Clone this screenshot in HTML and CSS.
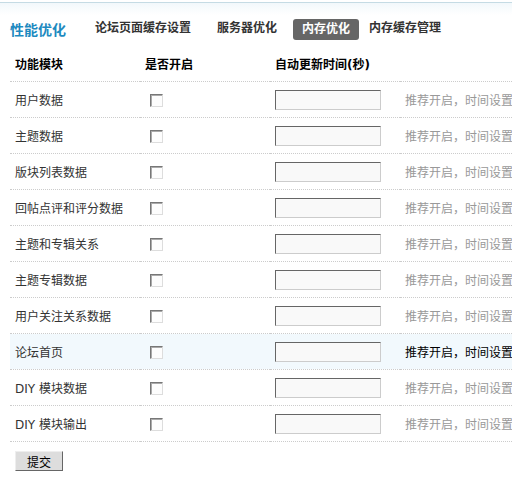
FILE: index.html
```html
<!DOCTYPE html>
<html lang="zh-CN">
<head>
    <meta charset="UTF-8">
    <title>性能优化</title>
    <link rel="stylesheet" href="styles.css">
</head>
<body>
    <div class="topbar"></div>
    <div class="itemtitle">
        <h3>性能优化</h3>
        <ul class="tab">
            <li>论坛页面缓存设置</li>
            <li>服务器优化</li>
            <li class="current">内存优化</li>
            <li>内存缓存管理</li>
        </ul>
    </div>
    <form class="form">
        <table class="tb">
            <colgroup><col class="c1"><col class="c2"><col class="c3"><col class="c4"></colgroup>
            <tr class="header">
                <th>功能模块</th>
                <th>是否开启</th>
                <th>自动更新时间(秒)</th>
                <th></th>
            </tr>
            <tr><td>用户数据</td><td><input type="checkbox" class="checkbox"></td><td><input type="text" class="txt"></td><td class="tips">推荐开启，时间设置</td></tr>
            <tr><td>主题数据</td><td><input type="checkbox" class="checkbox"></td><td><input type="text" class="txt"></td><td class="tips">推荐开启，时间设置</td></tr>
            <tr><td>版块列表数据</td><td><input type="checkbox" class="checkbox"></td><td><input type="text" class="txt"></td><td class="tips">推荐开启，时间设置</td></tr>
            <tr><td>回帖点评和评分数据</td><td><input type="checkbox" class="checkbox"></td><td><input type="text" class="txt"></td><td class="tips">推荐开启，时间设置</td></tr>
            <tr><td>主题和专辑关系</td><td><input type="checkbox" class="checkbox"></td><td><input type="text" class="txt"></td><td class="tips">推荐开启，时间设置</td></tr>
            <tr><td>主题专辑数据</td><td><input type="checkbox" class="checkbox"></td><td><input type="text" class="txt"></td><td class="tips">推荐开启，时间设置</td></tr>
            <tr><td>用户关注关系数据</td><td><input type="checkbox" class="checkbox"></td><td><input type="text" class="txt"></td><td class="tips">推荐开启，时间设置</td></tr>
            <tr class="hover"><td>论坛首页</td><td><input type="checkbox" class="checkbox"></td><td><input type="text" class="txt"></td><td class="tips">推荐开启，时间设置</td></tr>
            <tr><td>DIY 模块数据</td><td><input type="checkbox" class="checkbox"></td><td><input type="text" class="txt"></td><td class="tips">推荐开启，时间设置</td></tr>
            <tr><td>DIY 模块输出</td><td><input type="checkbox" class="checkbox"></td><td><input type="text" class="txt"></td><td class="tips">推荐开启，时间设置</td></tr>
        </table>
        <div class="opt"><button type="button" class="btn">提交</button></div>
    </form>
</body>
</html>
```

FILE: styles.css
```css
body {margin: 0; font: 12px Tahoma, "DejaVu Sans", "Noto Sans CJK SC", sans-serif; color: #333; background: #fff; overflow: hidden;}
.topbar {height: 2px; border-bottom: 1px solid #c5dbe4; background: #fff;}
.itemtitle {display: flex; align-items: center; height: 33px; padding: 9px 0 0 10px; margin-bottom: 1px; background: linear-gradient(to bottom, #f2f8fb, #fff 12px);}
.itemtitle h3 {margin: 0 29px 0 0; font-size: 14px; font-weight: bold; color: #1d8ac0;}
.tab {display: flex; align-items: center; margin: 0; padding: 0; list-style: none;}
.tab li {margin-right: 10px; padding: 0 8px; height: 21px; line-height: 21px; font-weight: bold; color: #333;}
.tab li:first-child {padding-left: 0;}
.tab li.current {background: #666; color: #fff; border-radius: 3px; margin: 2px 2px 0 -2px; padding: 0 9px;}

.form {padding: 0 0 0 10px; overflow: hidden;}
.tb {border-collapse: collapse; table-layout: fixed; width: 502px;}
.c1, .c2, .c3 {width: 130px;}
.tb th, .tb td {height: 35px; padding: 0 5px; text-align: left; white-space: nowrap; overflow: hidden; border-bottom: 1px dotted #ccc;}
.tb td.tips {padding-right: 0; text-overflow: clip;}
.tb th {font-weight: bold; color: #000;}
.tb td {color: #333;}
.tb tr.hover td {background: #f2f9fd;}
.tb .tips {color: #999;}
.tb tr.hover .tips {color: #000;}

.checkbox {appearance: none; margin: 0 0 0 5px; width: 13px; height: 13px; vertical-align: middle; box-sizing: border-box; border: 1px solid; border-color: #777 #ddd #ddd #777; box-shadow: inset 1px 1px 0 #aaa; background: #fdfdfd;}
.txt {box-sizing: border-box; width: 106px; height: 20px; margin: 0; padding: 0 2px; border: 1px solid; border-color: #666 #ccc #ccc #666; background: #f9f9f9; vertical-align: middle;}

.opt {padding: 9px 0 0 5px;}
.btn {width: 48px; height: 20px; padding: 0; font: 12px "Noto Sans CJK SC", sans-serif; color: #000; background: #ddd; border: 1px solid; border-color: #eee #666 #666 #eee;}
```
